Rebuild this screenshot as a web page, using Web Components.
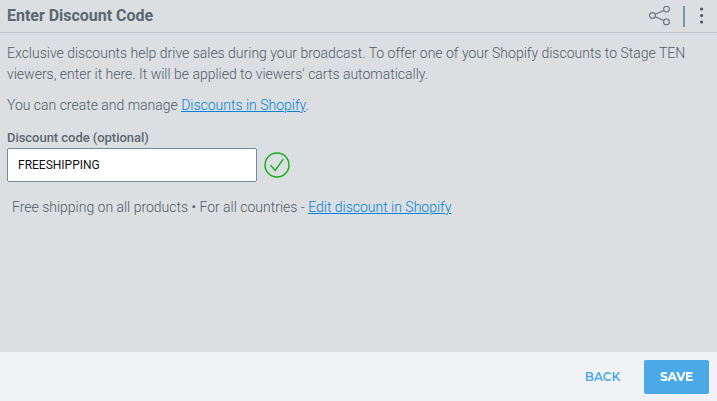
<!DOCTYPE html>
<html lang="en">
<head>
<meta charset="utf-8">
<title>Enter Discount Code</title>
<style>
    body {
        margin: 0;
        height: 100vh;
        overflow: hidden;
        font-family: Roboto, "Liberation Sans", sans-serif;
        color: #5b6770;
    }
</style>
</head>
<body>

<discount-panel></discount-panel>

<script>
class PanelHeader extends HTMLElement {
    constructor() {
        super();
        this.attachShadow({mode: 'open'});
        this.shadowRoot.innerHTML = `
            <style>
                :host {
                    display: flex;
                    align-items: center;
                    box-sizing: border-box;
                    height: 33px;
                    padding: 0 13px 0 7px;
                    border-bottom: 1px solid #bfc6cb;
                }

                h1 {
                    flex: 1;
                    margin: 0;
                    font-size: 16px;
                    font-weight: 700;
                    line-height: 32px;
                    letter-spacing: -0.02px;
                }

                svg {
                    display: block;
                }

                .divider {
                    width: 2px;
                    height: 21px;
                    margin: 0 15px 0 12px;
                    background: #7796a3;
                }
            </style>

            <h1><slot></slot></h1>
            <svg class="share" width="23" height="20" viewBox="0 0 23 20" fill="none" stroke="#65717b" stroke-width="1.1">
                <circle cx="4.5" cy="9.5" r="2.9" />
                <circle cx="18.5" cy="3.1" r="2.9" />
                <circle cx="18.5" cy="15.9" r="2.9" />
                <path d="M7.2 8.3L15.8 4.4M7.2 10.7L15.8 14.6" />
            </svg>
            <div class="divider"></div>
            <svg class="more" width="4" height="18" viewBox="0 0 4 18" fill="#4c5862">
                <circle cx="1.6" cy="2" r="1.6" />
                <circle cx="1.6" cy="8.5" r="1.6" />
                <circle cx="1.6" cy="15" r="1.6" />
            </svg>
        `;
    }
}

class TextLink extends HTMLElement {
    constructor() {
        super();
        this.attachShadow({mode: 'open'});
        // no whitespace around the anchor, the link sits inside a sentence
        this.shadowRoot.innerHTML = `
            <style>
                :host {
                    display: inline;
                }

                a {
                    color: #0082d8;
                    text-decoration: underline;
                    cursor: pointer;
                }
            </style><a><slot></slot></a>`;
    }
}

class CodeField extends HTMLElement {
    constructor() {
        super();
        this.attachShadow({mode: 'open'});
        this.shadowRoot.innerHTML = `
            <style>
                :host {
                    display: block;
                }

                label {
                    display: block;
                    font-size: 13px;
                    font-weight: 500;
                    line-height: 20px;
                    letter-spacing: -0.04px;
                }

                .row {
                    display: flex;
                    align-items: center;
                    gap: 7px;
                }

                input {
                    box-sizing: border-box;
                    width: 250px;
                    height: 34px;
                    margin: 0;
                    padding: 0 10px;
                    border: 1px solid #6c8c99;
                    border-radius: 2px;
                    background: #fff;
                    color: #111;
                    font: 400 12px Roboto, "Liberation Sans", sans-serif;
                    outline: none;
                }
            </style>

            <label for="code"><slot></slot></label>
            <div class="row">
                <input id="code" type="text">
                <svg width="26" height="26" viewBox="0 0 26 26" fill="none" stroke="#14ae14" stroke-width="1.4">
                    <circle cx="13" cy="13" r="12" />
                    <path d="M6.5 13.2L11.3 18.4L19.2 7.2" />
                </svg>
            </div>
        `;
    }

    connectedCallback() {
        this.shadowRoot.querySelector('input').value = this.getAttribute('value') || '';
    }
}

class PanelButton extends HTMLElement {
    constructor() {
        super();
        this.attachShadow({mode: 'open'});
        this.shadowRoot.innerHTML = `
            <style>
                :host {
                    display: block;
                }

                button {
                    display: block;
                    width: 65px;
                    height: 34px;
                    padding: 0 0 2px;
                    border: 0;
                    border-radius: 2px;
                    background: none;
                    color: #4aa9e6;
                    font: 600 12px Montserrat, Inter, "Open Sans", sans-serif;
                    cursor: pointer;
                }

                :host([primary]) button {
                    background: #4aa9e6;
                    color: #fff;
                    font-weight: 700;
                }
            </style>

            <button type="button"><slot></slot></button>
        `;
    }
}

class DiscountPanel extends HTMLElement {
    constructor() {
        super();
        this.attachShadow({mode: 'open'});
        this.shadowRoot.innerHTML = `
            <style>
                :host {
                    display: flex;
                    flex-direction: column;
                    height: 100vh;
                    background: #dcdfe2;
                }

                main {
                    flex: 1;
                    padding: 10px 7px 0;
                    font-size: 14px;
                    font-weight: 300;
                    line-height: 21px;
                    letter-spacing: -0.008px;
                }

                p {
                    margin: 0 0 10px;
                    color: #505c66;
                }

                code-field {
                    margin-top: 12px;
                }

                .summary {
                    margin: 15px 0 0 5px;
                }

                footer {
                    display: flex;
                    align-items: center;
                    justify-content: flex-end;
                    gap: 9px;
                    box-sizing: border-box;
                    height: 49px;
                    padding: 1px 8px 0;
                    background: #f0f2f6;
                }
            </style>

            <panel-header>Enter Discount Code</panel-header>
            <main>
                <p>Exclusive discounts help drive sales during your broadcast. To offer one of your Shopify discounts to Stage TEN viewers, enter it here. It will be applied to viewers' carts automatically.</p>
                <p>You can create and manage <text-link>Discounts in Shopify</text-link>.</p>
                <code-field value="FREESHIPPING">Discount code (optional)</code-field>
                <p class="summary">Free shipping on all products • For all countries - <text-link>Edit discount in Shopify</text-link></p>
            </main>
            <footer>
                <panel-button>BACK</panel-button>
                <panel-button primary>SAVE</panel-button>
            </footer>
        `;
    }
}

window.customElements.define('panel-header', PanelHeader);
window.customElements.define('text-link', TextLink);
window.customElements.define('code-field', CodeField);
window.customElements.define('panel-button', PanelButton);
window.customElements.define('discount-panel', DiscountPanel);
</script>
</body>
</html>
